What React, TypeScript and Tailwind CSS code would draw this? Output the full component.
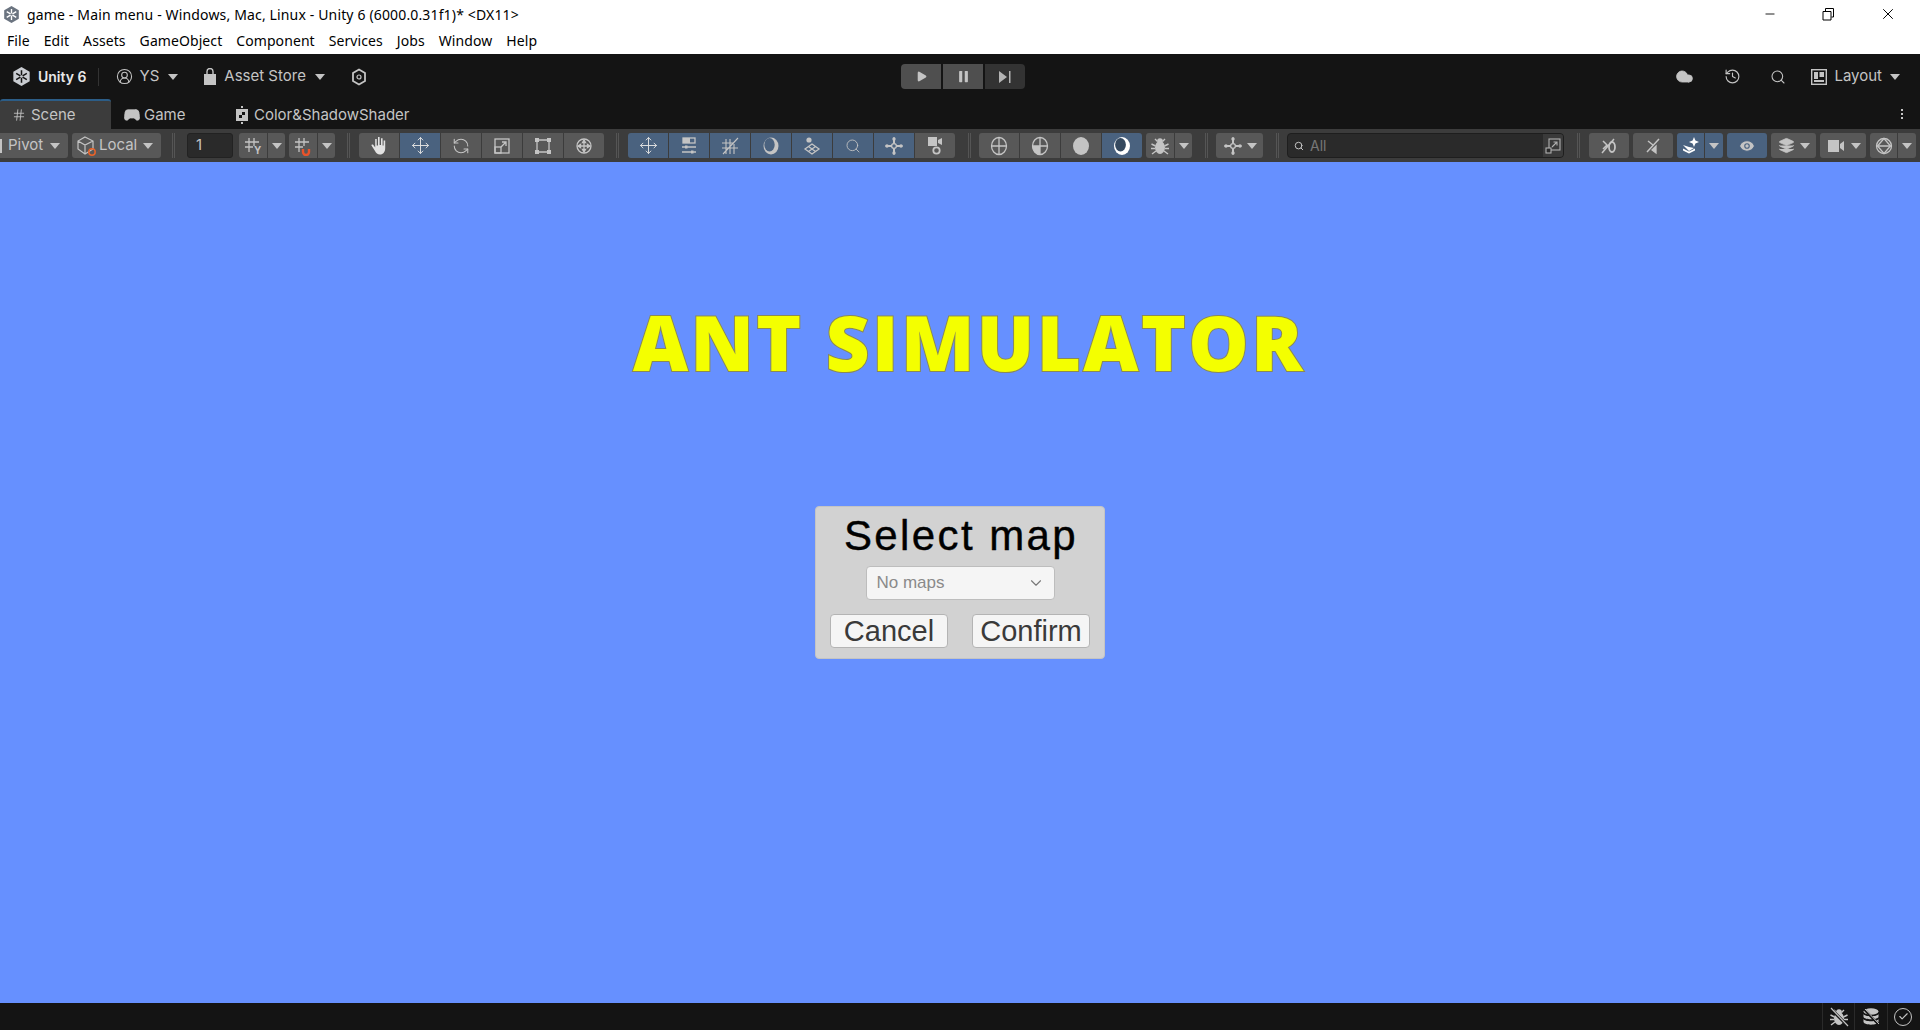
import React from 'react'
import { Play, Pause, Search, Move, RefreshCcw, Eye, History, Cloud, Check, X, Minus, ChevronDown, Gamepad2, Hash, CircleUserRound, Layers } from 'lucide-react'

const MENU = ['File', 'Edit', 'Assets', 'GameObject', 'Component', 'Services', 'Jobs', 'Window', 'Help']

// ── Small icons ──────────────────────────────────────────────
const Caret = ({ className = 'text-[#c4c4c4]' }: { className?: string }) => (
  <svg width="10" height="6" viewBox="0 0 10 6" className={className}>
    <path d="M0 0h10L5 6z" fill="currentColor" />
  </svg>
)

const UnityLogo = ({ size = 20, fill = '#c9ccd1', cut = '#141414' }: { size?: number; fill?: string; cut?: string }) => (
  <svg width={size} height={size} viewBox="0 0 20 20">
    <path d="M10 0l8.600 5v10L10 20l-8.600-5V5z" fill={fill} />
    <path d="M10 3.500v5.200M10 11.200v5.300M4.400 6.700l4.400 2.600M15.600 6.700l-4.400 2.600M4.400 13.300l4.400-2.600M15.600 13.300l-4.400-2.600" stroke={cut} strokeWidth="1.600" />
  </svg>
)

const Svg = ({ children, size = 20 }: { children: React.ReactNode; size?: number }) => (
  <svg width={size} height={size} viewBox="0 0 20 20" fill="none" stroke="#c4c4c4" strokeWidth="1.300">
    {children}
  </svg>
)

const HandIcon = () => (
  <svg width="20" height="20" viewBox="0 0 20 20" fill="#e2e2e2">
    <path d="M9 1h1.600v8H12V2.200h1.600V9.500h1V4.500h1.600V12c0 4-2 6.500-5.200 6.500-2.600 0-3.800-1.200-5-3.500L2.500 9.600c-.4-.9 1-1.700 1.700-.8L6.200 11.400V3h1.500v6.500H9z" />
  </svg>
)
const MoveIcon = () => <Move size={19} strokeWidth={1.200} className="text-[#e2e2e2]" />
const Sliders = () => (
  <Svg>
    <rect x="4" y="2" width="12" height="5" fill="#4a627f" />
    <rect x="4" y="2" width="7" height="5" fill="#c4c4c4" stroke="none" />
    <path d="M3 11h14M3 16h14" />
    <rect x="6" y="9.500" width="2.500" height="3" fill="#c4c4c4" stroke="none" />
    <rect x="12" y="14.500" width="2.500" height="3" fill="#c4c4c4" stroke="none" />
  </Svg>
)
const GridOff = () => (
  <Svg>
    <path d="M6 3v15M10 3v15M14 8v10M2 7h12M2 12h16M3 18L18 2" strokeWidth="1.100" />
  </Svg>
)
const Moon = () => (
  <svg width="20" height="20" viewBox="0 0 20 20">
    <ellipse cx="10" cy="10" rx="7.500" ry="8.500" fill="#c4c4c4" />
    <ellipse cx="8.500" cy="8.800" rx="5.200" ry="6.800" fill="#4a627f" />
  </svg>
)
const Pin = () => (
  <Svg>
    <circle cx="7" cy="4" r="2.600" fill="#c4c4c4" stroke="none" />
    <path d="M10 8l7 5-7 5-7-5z" />
    <path d="M6.500 10.500l7 5M13.500 10.500l-7 5" />
  </Svg>
)
const Nodes = () => (
  <Svg>
    <circle cx="10" cy="10" r="2.400" />
    <path d="M10 1.500v6M10 12.500v6M1.500 10h6M12.500 10h6" strokeWidth="2" />
    <circle cx="10" cy="3" r="1.700" fill="#c4c4c4" stroke="none" />
    <circle cx="10" cy="17" r="1.700" fill="#c4c4c4" stroke="none" />
    <circle cx="3" cy="10" r="1.700" fill="#c4c4c4" stroke="none" />
    <circle cx="17" cy="10" r="1.700" fill="#c4c4c4" stroke="none" />
  </Svg>
)
const CamIcon = ({ ring = true }: { ring?: boolean }) => (
  <svg width="20" height="20" viewBox="0 0 20 20" fill="#c4c4c4">
    {ring ? (
      <>
        <path d="M3 1h9v9H3zM13 4l4-2v7l-4-2z" />
        <circle cx="11.500" cy="14.500" r="3.200" fill="none" stroke="#c4c4c4" strokeWidth="1.800" />
      </>
    ) : (
      <path d="M2 4h11v12H2zM14 8l4-3v10l-4-3z" />
    )}
  </svg>
)
const Wire = () => (
  <Svg>
    <ellipse cx="10" cy="10" rx="7.500" ry="8.500" />
    <path d="M10 1.500v17M2.500 10h15" />
  </Svg>
)
const Shaded = () => (
  <Svg>
    <ellipse cx="10" cy="10" rx="7.500" ry="8.500" />
    <path d="M10 1.500v17M2.500 10h15" />
    <path d="M2.500 10H10v8.500c-4.200 0-7.500-4-7.500-8.500z" fill="#c4c4c4" stroke="none" />
  </Svg>
)
const Solid = () => (
  <svg width="20" height="20" viewBox="0 0 20 20">
    <ellipse cx="10" cy="10" rx="8" ry="9" fill="#c4c4c4" />
  </svg>
)
const LitMoon = () => (
  <svg width="20" height="20" viewBox="0 0 20 20">
    <ellipse cx="10" cy="10" rx="8" ry="9" fill="#fff" />
    <ellipse cx="8.500" cy="8.800" rx="5.400" ry="6.800" fill="#35495f" />
  </svg>
)
const GridY = () => (
  <Svg>
    <path d="M6 2v14M11 2v8M2 6h14M2 11h8" />
    <text x="11" y="18" fontSize="10" fontWeight="700" fill="#c4c4c4" stroke="none" fontFamily="Inter, sans-serif">Y</text>
  </Svg>
)
const GridMagnet = () => (
  <Svg>
    <path d="M6 2v14M11 2v8M2 6h14M2 11h8" />
    <path d="M10 13v3a3 3 0 0 0 6 0v-3" stroke="#e8532a" strokeWidth="2.400" />
  </Svg>
)
const Box = () => (
  <svg width="22" height="22" viewBox="0 0 22 22" fill="none" stroke="#c4c4c4" strokeWidth="1.200">
    <path d="M9 2l8 4v8l-8 5-7-5V6zM2 6l7 4 8-4M9 10v9" />
    <circle cx="16" cy="17" r="3.200" stroke="#e8632a" strokeWidth="1.500" />
  </svg>
)
const RectTool = () => (
  <Svg>
    <path d="M4 4h12v12H4z" />
    <path d="M2 2h4v4H2zM14 2h4v4h-4zM2 14h4v4H2zM14 14h4v4h-4z" fill="#c4c4c4" stroke="none" />
  </Svg>
)
const Transform = () => (
  <Svg>
    <circle cx="10" cy="10" r="7" />
    <path d="M10 5v10M5 10h10M10 4L8.500 6.500h3zM10 16l-1.500-2.500h3zM4 10l2.500-1.500v3zM16 10l-2.500-1.500v3z" fill="#c4c4c4" />
  </Svg>
)
const ScaleTool = () => (
  <Svg>
    <rect x="3" y="3" width="14" height="14" />
    <rect x="3" y="11" width="6" height="6" />
    <path d="M9 11l5-5M10 6h4v4" />
  </Svg>
)
const AudioOff = () => (
  <Svg>
    <path d="M4 5l4 4-4 4M3 17L15 3" strokeWidth="1.500" />
    <ellipse cx="13" cy="11" rx="3" ry="5" strokeWidth="1.800" />
  </Svg>
)
const FxOff = () => (
  <Svg>
    <path d="M4 16L16 3M5 5l5 4" strokeWidth="1.500" />
    <path d="M13 10v7l-4-3z" fill="#c4c4c4" />
  </Svg>
)
const Sparkles = () => (
  <svg width="20" height="20" viewBox="0 0 20 20" fill="#fff">
    <path d="M13 1l1.400 3.600L18 6l-3.600 1.400L13 11l-1.400-3.600L8 6l3.600-1.400z" />
    <path d="M2 9l6 2 5 1-5 3zM2 12.500l6 3 6-3v2l-6 3-6-3z" />
  </svg>
)
const Gizmo = () => (
  <Svg>
    <circle cx="10" cy="10" r="7.500" />
    <path d="M10 2.500L3.500 10l6.500 7.500 6.500-7.500z" />
    <path d="M3.500 10h13" />
  </Svg>
)
const LayoutIcon = () => (
  <svg width="16" height="16" viewBox="0 0 16 16">
    <rect x="0.700" y="0.700" width="14.600" height="14.600" fill="none" stroke="#c4c4c4" strokeWidth="1.400" />
    <path d="M3 3h4v7H3zM8.500 3H13v5H8.500zM3 11h10v2H3z" fill="#c4c4c4" />
  </svg>
)
const ExpandSearch = () => (
  <svg width="16" height="16" viewBox="0 0 16 16" fill="none" stroke="#b0b0b0" strokeWidth="1.100">
    <rect x="4" y="1" width="11" height="11" />
    <rect x="1" y="10" width="5" height="5" fill="#2a2a2a" />
    <path d="M7 9l5-5M8.500 4H12v3.500" />
  </svg>
)
const ShaderFile = () => (
  <svg width="12" height="18" viewBox="0 0 12 18" fill="#c4c4c4">
    <path d="M5 0h2v2H5zM5 16h2v2H5zM0 3h12v12H0z" />
    <path d="M6 6h3v3H6zM3 9h3v3H3z" fill="#141414" />
  </svg>
)
const Bag = () => (
  <svg width="14" height="18" viewBox="0 0 14 18" fill="#c4c4c4">
    <path d="M1 6h12v11H1z" />
    <path d="M4 6V3.500a3 3 0 0 1 6 0V6" fill="none" stroke="#c4c4c4" strokeWidth="1.400" />
  </svg>
)
const BugIcon = ({ off }: { off?: boolean }) => (
  <svg width="20" height="20" viewBox="0 0 20 20" fill="#c4c4c4">
    <ellipse cx="10" cy="11.500" rx="5" ry="6.500" />
    <circle cx="10" cy="5" r="2.800" />
    <path d="M5 3l2.500 2.500M15 3l-2.500 2.500M1.500 8l4 2M18.500 8l-4 2M1 12.500h4M19 12.500h-4M2 18l4-3M18 18l-4-3" stroke="#c4c4c4" strokeWidth="1.400" />
    {off && <path d="M1 1l18 18" stroke="#141414" strokeWidth="3" />}
    {off && <path d="M2 1l17 18" stroke="#c4c4c4" strokeWidth="1.200" />}
  </svg>
)
const DbOff = () => (
  <svg width="20" height="20" viewBox="0 0 20 20" fill="#c4c4c4">
    <ellipse cx="10" cy="4.500" rx="7.500" ry="3.200" />
    <path d="M2.500 7c1 3 14 3 15 0v3c-1 3-14 3-15 0zM2.500 12c1 3 14 3 15 0v3c-1 3.500-14 3.500-15 0z" />
    <path d="M3 2l15 16" stroke="#141414" strokeWidth="2.500" />
    <path d="M4 2l14 15" stroke="#c4c4c4" strokeWidth="1" />
  </svg>
)

// ── Toolbar pieces ───────────────────────────────────────────
const Grip = ({ className = '' }: { className?: string }) => (
  <div className={`flex h-[25px] gap-px ${className}`}>
    <div className="w-px bg-[#555]" />
    <div className="w-px bg-[#555]" />
  </div>
)

const Btn = ({ on, w = 'w-[40px]', children, className = '' }: { on?: boolean; w?: string; children: React.ReactNode; className?: string }) => (
  <div className={`flex h-[25px] ${w} items-center justify-center ${on ? 'bg-[#4a627f]' : 'bg-[#585858]'} ${className}`}>
    {children}
  </div>
)

const Group = ({ children, className = '' }: { children: React.ReactNode; className?: string }) => (
  <div className={`flex gap-px overflow-hidden rounded-[3px] ${className}`}>{children}</div>
)

const Split = ({ on, a, b, icon, className = '' }: { on?: boolean; a: string; b: string; icon: React.ReactNode; className?: string }) => (
  <Group className={className}>
    <Btn on={on} w={a}>{icon}</Btn>
    <Btn on={on} w={b}><Caret /></Btn>
  </Group>
)

export default function App() {
  return (
    <div className="flex h-[1030px] w-[1920px] flex-col overflow-hidden bg-[#6690ff] font-['Inter',sans-serif] text-[15px] text-[#c4c4c4]">
      {/* Window title + menu */}
      <div className="h-[54px] shrink-0 bg-white font-['Noto_Sans',sans-serif] text-[14px] tracking-[0.15px] text-black">
        <div className="flex h-[28px] items-center">
          <div className="ml-[3px] mr-[7px]"><UnityLogo size={17} fill="#6b7480" cut="#fff" /></div>
          <span>game - Main menu - Windows, Mac, Linux - Unity 6 (6000.0.31f1)* &lt;DX11&gt;</span>
          <div className="ml-auto flex items-center text-black">
            <Minus size={14} strokeWidth={1.500} className="mr-[44px]" />
            <svg width="14" height="14" viewBox="0 0 14 14" fill="none" stroke="#000" className="mr-[44px]">
              <path d="M2 4.500h8v8.500H2zM4.500 4V1.500h8V10H10.500" />
            </svg>
            <X size={18} strokeWidth={1.300} className="mr-[23px]" />
          </div>
        </div>
        <div className="flex h-[26px] items-start gap-[14px] pl-[7px] leading-[26px] tracking-[0.08px]">
          {MENU.map(m => <span key={m}>{m}</span>)}
        </div>
      </div>

      {/* Unity main toolbar */}
      <div className="relative flex h-[45px] shrink-0 items-center bg-[#141414]">
        <div className="ml-[12px]"><UnityLogo size={19} /></div>
        <span className="ml-[7px] text-[14px] font-semibold text-[#e8e8e8]">Unity 6</span>
        <div className="ml-[11px] h-[18px] w-px bg-[#333]" />
        <CircleUserRound size={17} strokeWidth={1.500} className="ml-[17px]" />
        <span className="ml-[7px]">YS</span>
        <Caret className="ml-[9px] text-[#c4c4c4]" />
        <div className="ml-[25px]"><Bag /></div>
        <span className="ml-[7px]">Asset Store</span>
        <Caret className="ml-[9px] text-[#c4c4c4]" />
        <svg width="16" height="18" viewBox="0 0 16 18" fill="none" stroke="#c4c4c4" strokeWidth="1.800" className="ml-[26px]">
          <path d="M8 1.500l6 3.500v8l-6 3.500L2 13V5z" />
          <circle cx="8" cy="9" r="2" strokeWidth="1.200" />
        </svg>

        <div className="absolute left-[901px] top-[10px] flex gap-[2px]">
          <div className="flex h-[25px] w-[40px] items-center justify-center rounded-l-[4px] bg-[#4f4f4f]"><Play size={13} fill="#c4c4c4" strokeWidth={0} /></div>
          <div className="flex h-[25px] w-[40px] items-center justify-center bg-[#4f4f4f]"><Pause size={15} fill="#c4c4c4" strokeWidth={0} /></div>
          <div className="flex h-[25px] w-[40px] items-center justify-center rounded-r-[4px] bg-[#333]">
            <svg width="12" height="14" viewBox="0 0 12 14" fill="#b4b4b4"><path d="M0 1l8 6-8 6zM10 1h1.500v12H10z" /></svg>
          </div>
        </div>

        <div className="ml-auto flex items-center">
          <Cloud size={19} fill="#c4c4c4" strokeWidth={1} />
          <History size={17} strokeWidth={1.600} className="ml-[30px]" />
          <Search size={16} strokeWidth={1.600} className="ml-[29px]" />
          <div className="ml-[25px]"><LayoutIcon /></div>
          <span className="ml-[7px]">Layout</span>
          <Caret className="ml-[8px] mr-[20px] text-[#c4c4c4]" />
        </div>
      </div>

      {/* Tabs */}
      <div className="flex h-[30px] shrink-0 items-stretch bg-[#141414]">
        <div className="flex w-[111px] items-center rounded-t-[3px] border-t-2 border-[#2c5d87] bg-[#3c3c3c] pl-[12px]">
          <Hash size={14} strokeWidth={1.500} />
          <span className="ml-[5px]">Scene</span>
        </div>
        <div className="ml-[12px] flex w-[113px] items-center pt-[2px]">
          <Gamepad2 size={18} fill="#c4c4c4" strokeWidth={1} />
          <span className="ml-[3px]">Game</span>
        </div>
        <div className="flex items-center pt-[2px]">
          <ShaderFile />
          <span className="ml-[6px]">Color&amp;ShadowShader</span>
        </div>
        <div className="ml-auto mr-[17px] flex flex-col justify-center gap-[2px]">
          <div className="h-[2px] w-[2px] bg-[#c4c4c4]" />
          <div className="h-[2px] w-[2px] bg-[#c4c4c4]" />
          <div className="h-[2px] w-[2px] bg-[#c4c4c4]" />
        </div>
      </div>

      {/* Scene toolbar */}
      <div className="flex h-[33px] shrink-0 items-center bg-[#3c3c3c]">
        <div className="flex h-[25px] w-[68px] items-center rounded-r-[3px] bg-[#585858]">
          <div className="h-[14px] w-[2px] bg-[#c4c4c4]" />
          <span className="ml-[6px]">Pivot</span>
          <Caret className="ml-[7px] text-[#c4c4c4]" />
        </div>
        <div className="ml-[4px] flex h-[25px] w-[89px] items-center rounded-[3px] bg-[#585858] pl-[4px]">
          <Box />
          <span className="ml-[1px]">Local</span>
          <Caret className="ml-[6px] text-[#c4c4c4]" />
        </div>
        <Grip className="ml-[11px]" />
        <div className="ml-[12px] flex h-[25px] w-[46px] items-center rounded-[3px] border border-[#222] bg-[#2a2a2a] pl-[8px]">1</div>
        <Split a="w-[28px]" b="w-[17px]" icon={<GridY />} className="ml-[6px]" />
        <Split a="w-[28px]" b="w-[17px]" icon={<GridMagnet />} className="ml-[4px]" />
        <Grip className="ml-[12px]" />
        <Group className="ml-[9px]">
          <Btn><HandIcon /></Btn>
          <Btn on><MoveIcon /></Btn>
          <Btn><RefreshCcw size={18} strokeWidth={1.400} /></Btn>
          <Btn><ScaleTool /></Btn>
          <Btn><RectTool /></Btn>
          <Btn><Transform /></Btn>
        </Group>
        <Grip className="ml-[12px]" />
        <Group className="ml-[9px]">
          <Btn on><MoveIcon /></Btn>
          <Btn on><Sliders /></Btn>
          <Btn on><GridOff /></Btn>
          <Btn on><Moon /></Btn>
          <Btn on><Pin /></Btn>
          <Btn on><Search size={16} strokeWidth={1.300} /></Btn>
          <Btn on><Nodes /></Btn>
          <Btn><CamIcon /></Btn>
        </Group>
        <Grip className="ml-[13px]" />
        <Group className="ml-[8px]">
          <Btn><Wire /></Btn>
          <Btn><Shaded /></Btn>
          <Btn><Solid /></Btn>
          <Btn on><LitMoon /></Btn>
        </Group>
        <Split a="w-[28px]" b="w-[17px]" icon={<BugIcon />} className="ml-[4px]" />
        <Grip className="ml-[13px]" />
        <Group className="ml-[8px]">
          <div className="flex h-[25px] w-[47px] items-center justify-center gap-[4px] bg-[#585858]"><Nodes /><Caret /></div>
        </Group>
        <Grip className="ml-[13px]" />
        <div className="ml-[8px] flex h-[25px] w-[277px] items-center overflow-hidden rounded-[4px] border border-[#1e1e1e] bg-[#2a2a2a] pl-[6px]">
          <Search size={10} strokeWidth={2.400} />
          <span className="ml-[6px] text-[14px] text-[#777]">All</span>
          <div className="ml-auto flex h-full w-[20px] items-center justify-center bg-[#3a3a3a]"><ExpandSearch /></div>
        </div>
        <Grip className="ml-[13px]" />
        <Btn className="ml-[9px] rounded-[3px]"><AudioOff /></Btn>
        <Btn className="ml-[4px] rounded-[3px]"><FxOff /></Btn>
        <Split on a="w-[27px]" b="w-[18px]" icon={<Sparkles />} className="ml-[4px]" />
        <Btn on className="ml-[4px] rounded-[3px]"><Eye size={18} fill="#c4c4c4" stroke="#4a627f" strokeWidth={1.500} /></Btn>
        <div className="ml-[4px] flex h-[25px] w-[45px] items-center justify-center gap-[5px] rounded-[3px] bg-[#585858]">
          <Layers size={17} fill="#c4c4c4" strokeWidth={1} />
          <Caret />
        </div>
        <div className="ml-[4px] flex h-[25px] w-[46px] items-center justify-center gap-[5px] rounded-[3px] bg-[#585858]">
          <CamIcon ring={false} />
          <Caret />
        </div>
        <Split a="w-[27px]" b="w-[18px]" icon={<Gizmo />} className="ml-[4px]" />
      </div>

      {/* Game view */}
      <div className="flex min-h-0 flex-1 flex-col items-center">
        <h1 className="ml-[18px] mt-[135px] h-[90px] font-['Open_Sans',sans-serif] text-[76px] font-extrabold leading-[90px] tracking-[2.400px] text-[#f4ff00] [-webkit-text-stroke:2px_#8a8a55] [paint-order:stroke_fill]">
          ANT SIMULATOR
        </h1>
        <div className="mt-[119px] flex h-[153px] w-[290px] flex-col items-center rounded-[4px] border border-[#c4c4c4] bg-[#d2d2d2] font-['Liberation_Sans',sans-serif]">
          <div className="ml-[2px] mt-[5px] h-[48px] text-[42px] leading-[48px] tracking-[2.400px] text-black [-webkit-text-stroke:0.4px_#000]">Select map</div>
          <div className="mt-[6px] flex h-[34px] w-[189px] items-center rounded-[4px] border border-[#bdbdbd] bg-[#f5f5f5] pl-[10px] text-[17px] text-[#8a8a8a]">
            <span>No maps</span>
            <ChevronDown size={18} strokeWidth={1.500} className="ml-auto mr-[9px] text-[#777]" />
          </div>
          <div className="mt-[14px] flex w-full justify-between px-[14px]">
            <div className="flex h-[34px] w-[118px] items-center justify-center rounded-[4px] border border-[#b4b4b4] bg-[#f5f5f5] pt-[2px] text-[29px] text-[#3a3a3a]">Cancel</div>
            <div className="flex h-[34px] w-[118px] items-center justify-center rounded-[4px] border border-[#b4b4b4] bg-[#f5f5f5] pt-[2px] text-[29px] text-[#3a3a3a]">Confirm</div>
          </div>
        </div>
      </div>

      {/* Status bar */}
      <div className="flex h-[27px] shrink-0 items-center bg-[#141414] pl-[1822px]">
        <div className="flex h-full w-[32px] items-center justify-center border-l border-[#2a2a2a]"><BugIcon off /></div>
        <div className="flex h-full w-[33px] items-center justify-center border-l border-[#2a2a2a]"><DbOff /></div>
        <div className="flex h-full items-center border-l border-[#2a2a2a] pl-[6px]">
          <div className="flex h-[18px] w-[18px] items-center justify-center rounded-full border border-[#c4c4c4]"><Check size={11} strokeWidth={2.500} /></div>
        </div>
      </div>
    </div>
  )
}
